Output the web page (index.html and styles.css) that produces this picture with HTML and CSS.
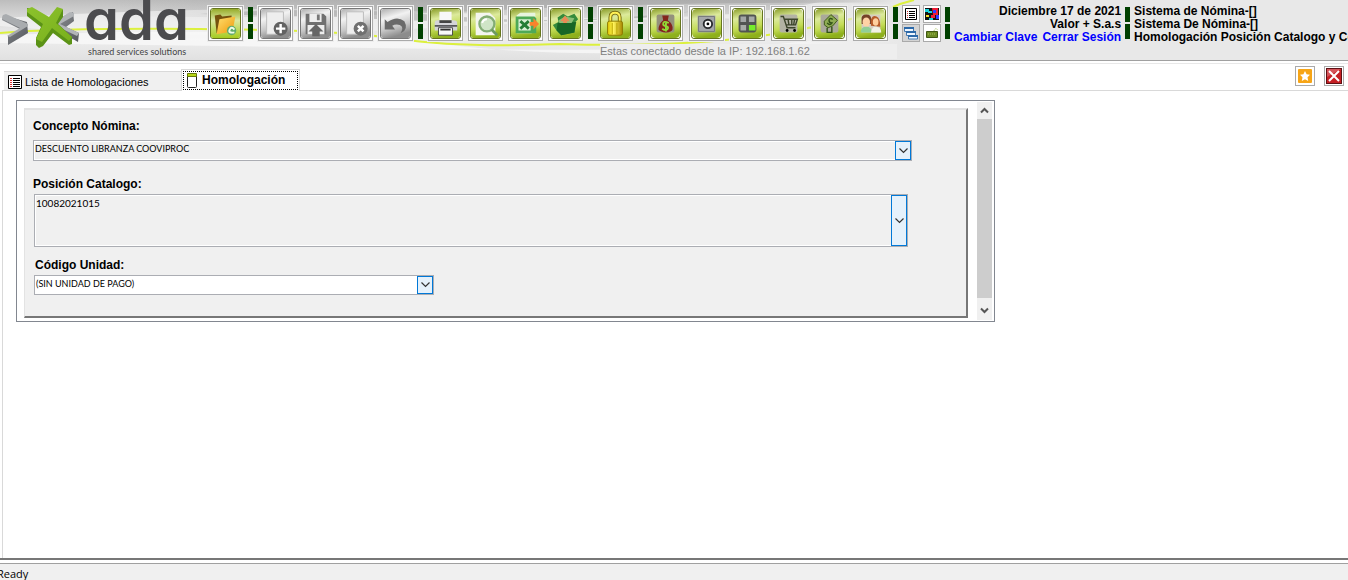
FILE: index.html
```html
<!DOCTYPE html>
<html lang="es">
<head>
<meta charset="utf-8">
<title>Homologación</title>
<link rel="stylesheet" href="styles.css">
</head>
<body>
<svg class="defs" width="0" height="0" aria-hidden="true">
  <defs>
    <linearGradient id="lime" x2=".2" y2="1"><stop offset="0" stop-color="#8b9e2a"/><stop offset=".35" stop-color="#dcea9c"/><stop offset=".7" stop-color="#c3dc55"/><stop offset="1" stop-color="#8eb01c"/></linearGradient>
    <linearGradient id="shade" x2="0" y2="1"><stop offset="0" stop-color="#98ad2c"/><stop offset=".4" stop-color="#dbe8a2"/><stop offset="1" stop-color="#a6cc20"/></linearGradient>
    <linearGradient id="gray" x2=".3" y2="1"><stop offset="0" stop-color="#b0b0b0"/><stop offset=".35" stop-color="#f2f2f2"/><stop offset=".7" stop-color="#c8c8c8"/><stop offset="1" stop-color="#8c8c8c"/></linearGradient>
    <linearGradient id="gold" x2="1" y2="1"><stop offset="0" stop-color="#ffe070"/><stop offset="1" stop-color="#ef9708"/></linearGradient>
    <linearGradient id="lock" x2="1"><stop offset="0" stop-color="#e0c800"/><stop offset=".4" stop-color="#fff35a"/><stop offset="1" stop-color="#a78600"/></linearGradient>
    <linearGradient id="steel" x2="1" y2="1"><stop offset="0" stop-color="#8d9094"/><stop offset="1" stop-color="#56595e"/></linearGradient>
    <linearGradient id="leaf" x2="1" y2="1"><stop offset="0" stop-color="#8cc22c"/><stop offset="1" stop-color="#79b01c"/></linearGradient>
    <linearGradient id="sky" x2="0" y2="1"><stop offset="0" stop-color="#bdbdbd"/><stop offset=".35" stop-color="#dedede"/><stop offset=".65" stop-color="#ededed"/><stop offset="1" stop-color="#e1e1e1"/></linearGradient>
    <linearGradient id="fade" x2="1"><stop offset="0" stop-color="#e8e8e8" stop-opacity="0"/><stop offset="1" stop-color="#e8e8e8"/></linearGradient>
    <linearGradient id="band" x2="1"><stop offset="0" stop-color="#999" stop-opacity="0"/><stop offset=".4" stop-color="#999"/><stop offset="1" stop-color="#999"/></linearGradient>
  </defs>
</svg>

<header class="banner">
  <svg class="banner-art" viewBox="0 0 900 60" width="900" height="60" aria-hidden="true">
    <rect width="900" height="60" fill="url(#sky)"/>
    <path d="M0 18Q260 2 480 14T820 2H900V20Q680 14 430 28T0 26Z" fill="#f4f4f4" opacity=".7"/>
    <path d="M120 0H900V4Q700 0 500 10T120 16Z" fill="url(#band)" opacity=".45"/>
    <path d="M200 14Q330 5 450 16T720 8L640 18Q480 26 340 17Z" fill="#aaa" opacity=".6"/>
    <path d="M0 35Q280 25 450 45T840 37L900 24V44Q680 52 450 49T0 43Z" fill="#fafafa" opacity=".75"/>
    <path d="M0 33Q60 28 200 29T400 39T560 44Q690 48 780 33T900 3" fill="none" stroke="#dcf03e" stroke-width="2"/>
    <rect x="780" width="120" height="60" fill="url(#fade)"/>
    <path d="M893 7L900 4L914 0" fill="none" stroke="#dcf03e" stroke-width="2"/>
  </svg>
  <svg class="logo" viewBox="0 0 200 60" width="200" height="60" role="img" aria-label="ada shared services solutions">
    <path d="M3 15L27 22L28 33L8 45V36L20 29L2 20Z" fill="url(#steel)"/>
    <path d="M3 15L6 14L28 24V26L10 37L7 36L20 28L2 19Z" fill="#a9acaf"/>
    <path d="M73 12L55 20L54 28L78 42L79 33L66 27L74 21Z" fill="url(#steel)"/>
    <path d="M70 12L74 13L74 16L60 24L79 33L77 36L54 25V22Z" fill="#b2b5b8"/>
    <path d="M27 8V16L41 27L36 38V45L39 48L43 46L53 33L69 45L72 44V37L58 24L63 17V9L50 22L33 9Z" fill="#5b9216"/>
    <path d="M27 9L32 7L49 17L57 7L63 9L56 23L72 37L69 41L52 28L42 42L36 39L43 24L27 12Z" fill="url(#leaf)"/>
    <text class="logo-name" x="84" y="40">ada</text>
    <text class="logo-tag" x="88" y="55">shared services solutions</text>
  </svg>

  <div class="tool-area">
    <nav class="tools" aria-label="Herramientas">
      <button class="tool lime" aria-label="Abrir"><svg viewBox="0 0 31 31"><rect width="31" height="31" rx="2" fill="url(#shade)"/><path d="M4 7L10 6L12 8L22 7V11L10 25L6 26Z" fill="#76530d"/><path d="M9 11L26 8L23 24L6 27Z" fill="url(#gold)"/><circle cx="22" cy="23" r="5" fill="#62ab6b"/><path d="M25 22Q22 18 20 22T25 25" fill="none" stroke="#effbe7" stroke-width="2"/></svg></button>
      <span class="sep"></span>
      <div class="group">
        <button class="tool" aria-label="Nuevo"><svg viewBox="0 0 31 31"><rect width="31" height="31" rx="3" fill="url(#gray)"/><path d="M6 3H24V27H6Z" fill="#eee" stroke="#bbb"/><circle cx="21" cy="21" r="7.5" fill="#626262"/><path d="M21 16V26M16 21H26" stroke="#fff" stroke-width="2.6"/></svg></button>
        <button class="tool" aria-label="Guardar"><svg viewBox="0 0 31 31"><rect width="31" height="31" rx="3" fill="url(#gray)"/><path d="M5 5H24L27 8V27H5Z" fill="#707070"/><path d="M9 5H22V14H9Z" fill="#eee"/><path d="M17 6H20V12H17Z" fill="#777"/><path d="M7 17H25V27H7Z" fill="#eee"/><path d="M16 16L24 24H20V29H12V24H8Z" fill="#666"/></svg></button>
        <button class="tool" aria-label="Eliminar"><svg viewBox="0 0 31 31"><rect width="31" height="31" rx="3" fill="url(#gray)"/><path d="M6 3H24V27H6Z" fill="#eee" stroke="#bbb"/><circle cx="21" cy="21" r="7.5" fill="#707070"/><path d="M18 18L24 24M24 18L18 24" stroke="#fff" stroke-width="2.6"/></svg></button>
        <button class="tool" aria-label="Deshacer"><svg viewBox="0 0 31 31"><rect width="31" height="31" rx="3" fill="url(#gray)"/><path d="M4 11L7 14Q17 7 25 13Q30 22 21 26Q25 19 20 17Q15 16 12 18L15 22H4Z" fill="#6a6a6a"/></svg></button>
      </div>
      <span class="sep"></span>
      <div class="group">
        <button class="tool lime" aria-label="Imprimir"><svg viewBox="0 0 31 31"><rect width="31" height="31" rx="3" fill="url(#lime)"/><path d="M9 3H22V12H9Z" fill="#f8f8f8"/><path d="M4 15Q4 12 7 12H24Q28 12 28 15V23H4Z" fill="#d4d4d8"/><path d="M9 12H22V15H9Z" fill="#444"/><path d="M4 17H28V19H4Z" fill="#57575b"/><path d="M8 20H23V28H8Z" fill="#f8f8f8" stroke="#444"/><path d="M10 22H21" stroke="#333" stroke-width="2"/></svg></button>
        <button class="tool lime" aria-label="Buscar"><svg viewBox="0 0 31 31"><rect width="31" height="31" rx="3" fill="url(#lime)"/><path d="M5 4H20L26 10V28H5Z" fill="#f4f6ef"/><circle cx="17" cy="16" r="8" fill="#cfe5c7" stroke="#83ad75" stroke-width="2.500"/><path d="M22 22L28 28" stroke="#6c9a60" stroke-width="3"/><path d="M12 15Q13 11 17 11" fill="none" stroke="#fff" stroke-width="2"/></svg></button>
        <button class="tool lime" aria-label="Exportar a Excel"><svg viewBox="0 0 31 31"><rect width="31" height="31" rx="3" fill="url(#lime)"/><path d="M6 7L10 4H26V23L22 26H6Z" fill="#e8f5df"/><path d="M5 8H25L27 10V26H5Z" fill="#4ea957"/><path d="M8 11H21V23H8Z" fill="#d9efd5"/><path d="M10 13L19 21M19 13L10 21" stroke="#247d36" stroke-width="3"/><path d="M20 14H24V10L30 16L24 22V18H20Z" fill="#f9822c"/></svg></button>
        <button class="tool lime" aria-label="Importar"><svg viewBox="0 0 31 31"><rect width="31" height="31" rx="3" fill="url(#lime)"/><path d="M7 9L13 5L18 8L25 5L29 11L25 15V25L11 28L6 23L2 17L8 14Z" fill="#358b3c"/><path d="M7 15L27 14L25 25L11 28L6 23Z" fill="#176626"/><path d="M8 12L15 8L25 10L22 15H9Z" fill="#8bbf77"/><path d="M15 7L20 13H17V15H13V13H10Z" fill="#e98b55"/></svg></button>
      </div>
      <span class="sep"></span>
      <button class="tool lime" aria-label="Bloquear"><svg viewBox="0 0 31 31"><rect width="31" height="31" rx="3" fill="url(#lime)"/><path d="M10 14V9Q10 4 15 4T20 9V14" fill="none" stroke="#75680e" stroke-width="4"/><path d="M10 14V9Q10 4 15 4T20 9V14" fill="none" stroke="#fff155" stroke-width="2"/><rect x="7" y="13" width="16" height="15" rx="2" fill="url(#lock)" stroke="#8e7a00"/><path d="M12 15V27M17 15V27" stroke="#b8a300"/></svg></button>
      <span class="sep"></span>
      <div class="group wide">
        <button class="tool lime" aria-label="Pagos"><svg viewBox="0 0 31 31"><rect width="31" height="31" rx="5" fill="url(#lime)"/><rect x="6" y="6" width="19" height="19" rx="2" fill="#94917c"/><path d="M12 7H19L18 12Q24 16 23 22Q22 25 16 25T8 22Q8 16 13 12Z" fill="#83251d"/><path d="M19 15Q13 12 13 16Q13 18 16 18Q19 19 18 21Q16 24 12 21M16 13V24" fill="none" stroke="#91da35" stroke-width="2"/></svg></button>
        <button class="tool lime" aria-label="Tesorería"><svg viewBox="0 0 31 31"><rect width="31" height="31" rx="5" fill="url(#lime)"/><rect x="6" y="7" width="19" height="18" fill="#a5a7aa"/><path d="M7 8H24V24H7Z" fill="none" stroke="#74777a"/><circle cx="17" cy="16" r="4.5" fill="#fff" stroke="#292b2e" stroke-width="2"/><circle cx="17" cy="16" r="1.5"/></svg></button>
        <button class="tool lime" aria-label="Calculadora"><svg viewBox="0 0 31 31"><rect width="31" height="31" rx="5" fill="url(#lime)"/><rect x="6" y="6" width="19" height="19" rx="3" fill="#515452"/><path d="M8 8H14V14H8Z" fill="#a2a6a6"/><path d="M17 8H23V14H17Z" fill="#a5a9a8"/><path d="M8 17H14V23H8Z" fill="#a8aca8"/><path d="M17 17H24V23H17Z" fill="#75ed2b"/></svg></button>
        <button class="tool lime" aria-label="Compras"><svg viewBox="0 0 31 31"><rect width="31" height="31" rx="5" fill="url(#lime)"/><rect x="6" y="6" width="19" height="19" rx="2" fill="#b3b3a4"/><path d="M7 8H10L14 20H23M11 11H25L23 17H13M15 11L16 17M19 11V17M22 11L21 17" fill="none" stroke="#3d462c" stroke-width="1.5"/><circle cx="14" cy="23" r="1.5"/><circle cx="22" cy="23" r="1.5"/></svg></button>
        <button class="tool lime" aria-label="Presupuesto"><svg viewBox="0 0 31 31"><rect width="31" height="31" rx="5" fill="url(#lime)"/><rect x="6" y="6" width="19" height="19" rx="2" fill="#aaa99a"/><path d="M10 13L17 6L24 12L19 18L14 20L10 17Z" fill="#8eac53" stroke="#3c5715"/><path d="M19 11Q15 9 15 12T18 15Q16 18 13 15M13 20V25H18V19" fill="none" stroke="#315316" stroke-width="1.5"/></svg></button>
        <button class="tool lime" aria-label="Personal"><svg viewBox="0 0 31 31"><rect width="31" height="31" rx="5" fill="url(#lime)"/><rect x="6" y="6" width="20" height="19" fill="#d5cdc0"/><path d="M6 12Q5 6 11 6T16 12V16H6Z" fill="#754127"/><ellipse cx="11" cy="14" rx="4" ry="5" fill="#ffd2a5"/><path d="M5 25Q5 19 11 19T17 25Z" fill="#91cf96"/><path d="M16 18V11Q18 6 22 8T26 19Z" fill="#b65a28"/><ellipse cx="21" cy="14" rx="3" ry="4" fill="#ffcf9e"/><path d="M16 25Q17 18 22 19T27 25Z" fill="#f1f1e7"/></svg></button>
      </div>
      <span class="sep"></span>
      <div class="mini-grid">
        <button class="mini" aria-label="Lista"><svg viewBox="0 0 14 14"><path fill="#fff" stroke="#000" d="M1.500 1.500H12.500V12.500H1.500Z"/><path d="M5 4.500H11M5 6.500H11M5 8.500H11M5 10.500H11" stroke="#000"/><path d="M3 4.500H4M3 6.500H4M3 8.500H4M3 10.500H4" stroke="#c33"/></svg></button>
        <button class="mini" aria-label="Colores"><svg viewBox="0 0 14 14"><path fill="#111" d="M0 1H14V13H0Z"/><path fill="#18d3da" d="M0 2H4V4H7V6H3V5H0ZM4 11H8V13H4Z"/><path fill="#ed1c35" d="M7 1H13V8H10V11H6V8H8Z"/><path fill="#2c39ff" d="M8 3H11V6H8ZM11 8H14V12H11Z"/><path fill="#f6de24" d="M1 8H4V10H1Z"/></svg></button>
        <button class="mini pressed" aria-label="Ventanas"><svg viewBox="0 0 14 14"><path d="M0.500 1.500H9.500V5.500H0.500ZM2.500 5.500H11.500V9.500H2.500ZM4.500 9.500H13.500V13H4.500Z" fill="#eef6ff" stroke="#4779ad"/><path d="M0 2H10M2 6H12M4 10H14" stroke="#2c69a9" stroke-width="2"/></svg></button>
        <button class="mini" aria-label="Teclado"><svg viewBox="0 0 14 14"><path fill="#6c8b23" stroke="#405812" d="M1.500 5.500H12.500V11.500H1.500Z"/><path d="M9 5Q10 1 13 4M3 8H11" fill="none" stroke="#a9c35c" stroke-dasharray="1 1"/></svg></button>
      </div>
      <span class="sep"></span>
    </nav>
    <p class="ip">Estas conectado desde la IP: 192.168.1.62</p>
  </div>

  <div class="session">
    <p>Diciembre 17 de 2021</p>
    <p>Valor + S.a.s</p>
    <p class="links"><a href="#clave">Cambiar Clave</a><a href="#salir">Cerrar Sesión</a></p>
  </div>
  <span class="sep session-sep"></span>
  <div class="context">
    <p>Sistema de Nómina-[]</p>
    <p>Sistema De Nómina-[]</p>
    <p>Homologación Posición Catalogo y Ce</p>
  </div>
</header>

<main class="workspace">
  <div class="tabbar">
    <div class="tabs" role="tablist">
      <button class="tab" role="tab" aria-selected="false"><svg width="14" height="14" viewBox="0 0 14 14"><path fill="#fff" stroke="#000" d="M.5.500H13.500V13.500H.5Z"/><path d="M5 3.500H12M5 5.500H12M5 7.500H12M5 9.500H12M5 11.500H12" stroke="#000"/><path d="M2 3.500H4M2 5.500H4M2 7.500H4M2 9.500H4M2 11.500H4" stroke="#d33"/></svg>Lista de Homologaciones</button>
      <button class="tab active" role="tab" aria-selected="true"><span class="focus"><svg width="10" height="15" viewBox="0 0 10 15"><rect x=".5" y="1.500" width="9" height="13" rx="1" fill="#fff" stroke="#222"/><path fill="#b6d614" stroke="#66780a" d="M.5.500H9.500V3.500H.5Z"/></svg>Homologación</span></button>
    </div>
    <div class="window-tools">
      <button class="corner" aria-label="Favorito"><svg viewBox="0 0 16 16"><rect x="1" y="1" width="14" height="14" rx="1" fill="#f7a516"/><path d="M8 3L9.600 6.300L13 6.700L10.500 9.200L11.200 13L8 11.200L4.800 13L5.500 9.200L3 6.700L6.400 6.300Z" fill="#fff"/></svg></button>
      <button class="corner" aria-label="Cerrar"><svg viewBox="0 0 16 16"><rect x=".5" y=".5" width="15" height="15" fill="#c51f24" stroke="#5d1114"/><path d="M1 1H15L1 9Z" fill="#df777b" opacity=".6"/><path d="M3 3L13 13M13 3L3 13" stroke="#fff" stroke-width="2"/></svg></button>
    </div>
  </div>

  <section class="page" role="tabpanel">
    <div class="frame">
      <form class="form">
        <label for="concepto">Concepto Nómina:</label>
        <div class="combo concept">
          <select id="concepto"><option>DESCUENTO LIBRANZA COOVIPROC</option></select>
          <span class="drop"><svg width="9" height="6" viewBox="0 0 9 6"><path d="M.5.500L4.500 4.500L8.500.500"/></svg></span>
        </div>
        <label for="posicion">Posición Catalogo:</label>
        <div class="combo position">
          <select id="posicion"><option>10082021015</option></select>
          <span class="drop"><svg width="9" height="6" viewBox="0 0 9 6"><path d="M.5.500L4.500 4.500L8.500.500"/></svg></span>
        </div>
        <label class="indent" for="unidad">Código Unidad:</label>
        <div class="combo unit">
          <select id="unidad"><option>(SIN UNIDAD DE PAGO)</option></select>
          <span class="drop"><svg width="9" height="6" viewBox="0 0 9 6"><path d="M.5.500L4.500 4.500L8.500.500"/></svg></span>
        </div>
      </form>
      <div class="scrollbar">
        <button aria-label="Subir"><svg width="9" height="7" viewBox="0 0 9 7"><path d="M1 5.500L4.500 2L8 5.500"/></svg></button>
        <span class="thumb"></span>
        <button aria-label="Bajar"><svg width="9" height="7" viewBox="0 0 9 7"><path d="M1 1.500L4.500 5L8 1.500"/></svg></button>
      </div>
    </div>
  </section>
</main>
<footer class="status">Ready</footer>
</body>
</html>
```

FILE: styles.css
```css
* { box-sizing: border-box; }
body {
  margin: 0;
  min-height: 100vh;
  display: flex;
  flex-direction: column;
  overflow-x: hidden;
  background: #fff;
  color: #000;
  font: 12px/13px "Liberation Sans", Arial, sans-serif;
}
p { margin: 0; }
button { margin: 0; padding: 0; border: 0; background: none; font: inherit; color: inherit; }
.defs { position: absolute; }

.banner {
  position: relative;
  display: flex;
  align-items: flex-start;
  height: 64px;
  overflow: hidden;
  background: #e8e8e8;
}
.banner::after {
  content: "";
  position: absolute;
  inset: 60px 0 0;
  background: #fff;
  border-top: 1px solid #a0a0a0;
  border-bottom: 1px solid #e8e8e8;
}
.banner-art { position: absolute; left: 0; top: 0; overflow: visible; }
.logo { position: relative; flex: none; margin-right: 7px; }
.logo-name {
  font: 600 56px Inter, sans-serif;
  font-feature-settings: "cv11";
  fill: #4b4b4e;
}
.logo-tag { font: 9px Lato, sans-serif; fill: #444; }

.tool-area { position: relative; flex: none; padding-top: 5px; }
.tools { display: flex; align-items: flex-start; }
.group { display: flex; gap: 3px; }
.group.wide { gap: 4px; }
.tool {
  width: 37px;
  height: 37px;
  padding: 1px;
  border: 1px solid #ededed;
  outline: 1px solid #aaa;
  outline-offset: -2px;
  background: #fff;
}
.tool svg { display: block; width: 31px; height: 31px; margin: 1px; border: 1px solid #777; border-radius: 3px; }
.tool.lime svg { border-color: #66761e; }
.sep {
  flex: none;
  width: 5px;
  height: 32px;
  margin: 2px 4px 0;
  background: linear-gradient(#004000 15px, transparent 15px 17px, #004000 17px);
}
.mini-grid { display: grid; grid-template-columns: 18px 18px; gap: 1px 3px; }
.mini { width: 18px; height: 18px; padding: 1px; border: 1px solid #aaa; background: #fff; }
.mini.pressed { background: #d4d4d4; }
.mini svg { display: block; width: 14px; height: 14px; }
.ip {
  width: 297px;
  margin: 2px 0 0 393px;
  background: #eee;
  color: #808080;
  line-height: 15px;
  font-size: 11px;
}

.session, .context {
  position: relative;
  padding-top: 5px;
  font-weight: bold;
  white-space: nowrap;
}
.session { flex: none; text-align: right; }
.links { display: flex; gap: 5px; justify-content: flex-end; }
.links a { color: #00f; text-decoration: none; }
.session-sep { margin-top: 7px; }
.context { flex: 1; min-width: 0; overflow: hidden; }

.workspace { flex: 1; display: flex; flex-direction: column; }
.tabbar { display: flex; justify-content: space-between; height: 27px; padding: 0 4px; }
.tabs { display: flex; align-items: flex-end; }
.tab {
  display: flex;
  align-items: center;
  gap: 3px;
  width: 177px;
  height: 19px;
  margin-bottom: 1px;
  padding: 2px 4px 0;
  background: #f0f0f0;
  border-top: 1px solid #d9d9d9;
  font-size: 11px;
}
.tab.active {
  position: relative;
  width: 119px;
  height: 22px;
  margin-bottom: 0;
  padding: 0 1px;
  background: #fff;
  border: 1px solid #d9d9d9;
  border-bottom: 0;
  z-index: 1;
  font-size: 12px;
  font-weight: bold;
}
.focus {
  display: flex;
  align-items: center;
  gap: 5px;
  width: 100%;
  height: 19px;
  padding: 0 3px;
  border: 1px dotted #000;
}
.window-tools { display: flex; gap: 9px; padding-top: 2px; }
.corner { width: 20px; height: 20px; padding: 1px; border: 1px solid #aaa; }
.corner svg { display: block; width: 16px; height: 16px; }

.page {
  flex: 1;
  margin: -1px 0 0 2px;
  padding: 9px 14px 9px 13px;
  border-top: 1px solid #d9d9d9;
  border-left: 1px solid #d9d9d9;
}
.frame {
  display: flex;
  gap: 9px;
  max-width: 979px;
  padding: 1px 2px 1px 7px;
  border: 1px solid #828790;
}
.form {
  flex: 1;
  min-width: 0;
  margin: 6px 0 2px;
  padding: 9px 8px 21px;
  background: #f0f0f0;
  border: 2px solid #e3e3e3;
  border-color: #e3e3e3 #777 #777 #e3e3e3;
  border-left-width: 1px;
}
.form label { display: block; padding: 1px 0; font-weight: bold; }
.form .indent { padding-left: 2px; }
.combo { position: relative; border: 1px solid #abadb3; background: #f0f0f0; }
.combo select {
  display: block;
  width: 100%;
  padding: 0 18px 3px 0;
  appearance: none;
  border: 1px solid #fff;
  border-radius: 0;
  background: transparent;
  color: #000;
  font: 9px/14px Lato, sans-serif;
}
.concept { max-width: 879px; margin: 6px 0 16px; }
.concept select { height: 19px; }
.position { max-width: 874px; margin: 2px 0 11px 1px; }
.position select { height: 51px; padding-bottom: 36px; font-size: 10px; }
.unit { max-width: 400px; margin: 2px 0 0 1px; background: #fff; }
.unit select { height: 18px; }
.drop {
  position: absolute;
  inset: 0 0 0 auto;
  width: 16px;
  display: grid;
  place-items: center;
  border: 1px solid #0078d7;
  background: #e5f1fb;
  pointer-events: none;
}
.drop path { fill: none; stroke: #333; stroke-width: 1.2; }
.scrollbar { display: flex; flex-direction: column; width: 15px; background: #f0f0f0; }
.scrollbar button { display: grid; place-items: center; height: 17px; }
.scrollbar button:last-child { height: 22px; padding-top: 3px; }
.scrollbar path { fill: none; stroke: #555; stroke-width: 2; }
.thumb { flex: 1; background: #cdcdcd; }

.status {
  height: 22px;
  padding-top: 7px;
  border-top: 2px solid #777;
  background: linear-gradient(#fff 3px, #a0a0a0 3px 4px, #f0f0f0 4px);
  font: 11px/13px "Open Sans", sans-serif;
  text-indent: -3px;
}
```
